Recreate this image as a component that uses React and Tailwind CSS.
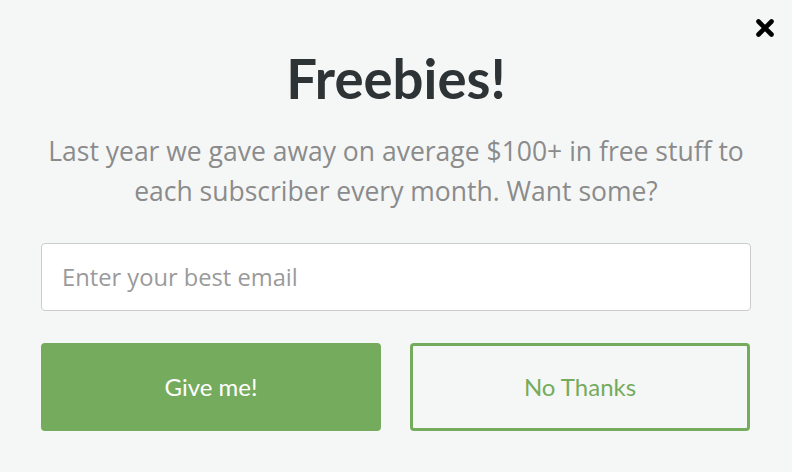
export default function App() {
  return (
    <div className="relative h-[472px] w-full bg-[#f5f7f7] px-[41px] pt-[46px]">
      <button className="absolute left-[755px] top-[18px] h-[20px] w-[20px]" aria-label="Close">
        <svg viewBox="0 0 20 20" className="h-[20px] w-[20px]">
          <path d="M3.5 3.5 L16.5 16.5 M16.5 3.5 L3.5 16.5" stroke="#000" strokeWidth="4.6" strokeLinecap="round" />
        </svg>
      </button>

      <h1 className="text-center font-['Lato',sans-serif] text-[54.5px] font-bold leading-[64px] text-[#2e3336]">
        Freebies!
      </h1>

      <p className="mt-[21px] text-center font-['Open_Sans',sans-serif] text-[26.5px] leading-[40px] text-[#8b8b8b]">
        Last year we gave away on average $100+ in free stuff to
        <br />
        each subscriber every month. Want some?
      </p>

      <input
        type="email"
        placeholder="Enter your best email"
        className="mt-[32px] block h-[68px] w-full rounded-[4px] border border-[#cccccc] bg-white px-[20px] font-['Open_Sans',sans-serif] text-[23.7px] text-[#555] outline-none placeholder:text-[#9a9a9a]"
      />

      <div className="mr-[1px] mt-[32px] grid grid-cols-2 gap-[29px]">
        <button className="h-[88px] rounded-[4px] bg-[#75ab5c] font-['Lato',sans-serif] text-[24px] text-white">
          Give me!
        </button>
        <button className="h-[88px] rounded-[4px] border-[3px] border-[#75ab5c] font-['Lato',sans-serif] text-[24px] text-[#75ab5c]">
          No Thanks
        </button>
      </div>
    </div>
  );
}
